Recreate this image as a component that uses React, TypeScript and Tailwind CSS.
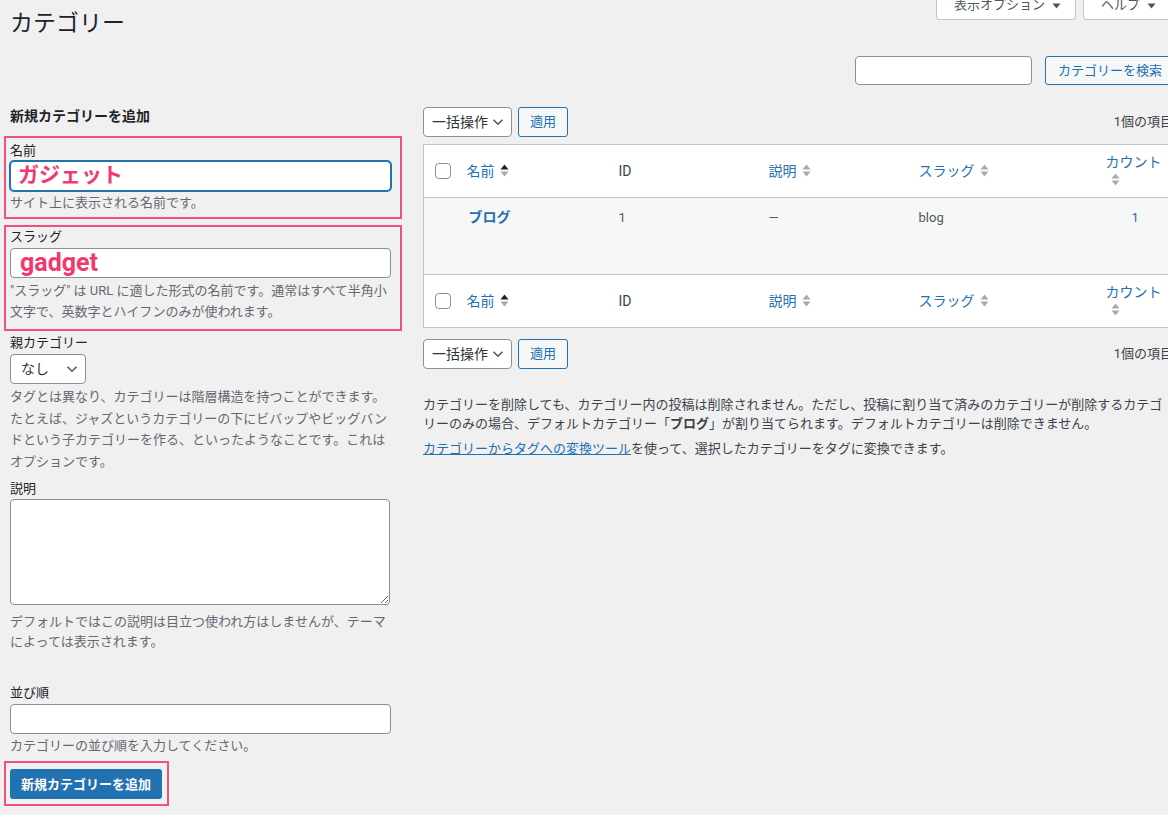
import React from 'react';

const font = "font-[Roboto,'Noto_Sans_CJK_JP',sans-serif]";

const Chevron = () => (
  <svg width="12" height="8" viewBox="0 0 12 8" className="shrink-0">
    <path d="M1.5 1.8 6 6.2l4.5-4.4" fill="none" stroke="#50575e" strokeWidth="1.6" />
  </svg>
);

const SortArrows = ({ active }: { active?: boolean }) => (
  <svg width="9" height="15" viewBox="0 0 9 15" className="inline-block ml-[5px] align-[-2px]">
    <path d="M0.5 6.5 4.5 1.5 8.5 6.5Z" fill={active ? '#1d2327' : '#a7aaad'} />
    <path d="M0.5 8.5 8.5 8.5 4.5 13.5Z" fill="#a7aaad" />
  </svg>
);

const Tri = () => (
  <svg width="9" height="6" viewBox="0 0 9 6" className="inline-block ml-[7px]">
    <path d="M0.5 0.5h8L4.5 5.5Z" fill="#50575e" />
  </svg>
);

const Checkbox = () => (
  <div className="w-[16px] h-[16px] border border-[#8c8f94] rounded-[4px] bg-white" />
);

const BulkActions = () => (
  <div className="flex items-center justify-between h-[30px]">
    <div className="flex items-center gap-[6px]">
      <div className="w-[89px] h-[30px] border border-[#8c8f94] rounded-[4px] bg-white flex items-center justify-between pl-[8px] pr-[7px] text-[14px] text-[#2c3338]">
        <span>一括操作</span>
        <Chevron />
      </div>
      <button className="h-[30px] px-[11px] border border-[#2271b1] rounded-[3px] bg-[#f6f7f7] text-[13px] text-[#2271b1]">
        適用
      </button>
    </div>
    <span className="text-[13px] text-[#3c434a] pr-[2px]">1個の項目</span>
  </div>
);

const HeadRow = () => (
  <tr className="h-[53px]">
    <td className="pl-[11px] align-middle">
      <Checkbox />
    </td>
    <th className="px-[10px] text-left font-normal align-middle">
      <span className="text-[#2271b1]">名前</span>
      <SortArrows active />
    </th>
    <th className="px-[10px] text-left font-normal align-middle text-[#3c434a]">ID</th>
    <th className="px-[10px] text-left font-normal align-middle">
      <span className="text-[#2271b1]">説明</span>
      <SortArrows />
    </th>
    <th className="px-[10px] text-left font-normal align-middle">
      <span className="text-[#2271b1]">スラッグ</span>
      <SortArrows />
    </th>
    <th className="px-[10px] text-left font-normal align-middle leading-[18px]">
      <span className="text-[#2271b1]">カウント</span>
      <br />
      <SortArrows />
    </th>
  </tr>
);

const Label = ({ children, className = '' }: { children: React.ReactNode; className?: string }) => (
  <div className={`text-[13px] leading-[18px] text-[#1d2327] ${className}`}>{children}</div>
);

const Help = ({ children, className = '' }: { children: React.ReactNode; className?: string }) => (
  <p className={`text-[13px] text-[#646970] ${className}`}>{children}</p>
);

export default function App() {
  return (
    <div className={`w-[1168px] h-[815px] overflow-hidden bg-[#f0f0f1] ${font}`}>
      <div className="w-[1186px] pl-[10px]">
        {/* header */}
        <div className="flex items-start justify-between">
          <h1 className="pt-[9px] text-[23px] leading-[30px] text-[#1d2327] font-normal">カテゴリー</h1>
          <div className="flex gap-[7px] -mt-[9px] pr-[8px]">
            <button className="h-[29px] w-[140px] border border-[#c3c4c7] border-t-0 rounded-b-[4px] bg-white text-[13px] leading-[18px] text-[#50575e] text-left pl-[17px]">
              表示オプション<Tri />
            </button>
            <button className="h-[29px] w-[95px] border border-[#c3c4c7] border-t-0 rounded-b-[4px] bg-white text-[13px] leading-[18px] text-[#50575e] text-left pl-[17px]">
              ヘルプ<Tri />
            </button>
          </div>
        </div>

        {/* search */}
        <div className="flex justify-end gap-[13px] mt-[17px] pr-[11px]">
          <input className="w-[177px] h-[29px] border border-[#8c8f94] rounded-[4px] bg-white" />
          <button className="h-[29px] w-[130px] border border-[#2271b1] rounded-[3px] bg-[#f6f7f7] text-[13px] text-[#2271b1]">
            カテゴリーを検索
          </button>
        </div>

        <div className="flex gap-[32px] mt-[22px]">
          {/* left column */}
          <div className="w-[381px] shrink-0">
            <h2 className="text-[14px] leading-[18px] font-bold text-[#1d2327]">新規カテゴリーを追加</h2>

            <div className="mt-[11px] -ml-[6px] w-[398px] border-2 border-[#f1507e] pl-[4px] pt-[4px] pb-[4px]">
              <Label>名前</Label>
              <input
                defaultValue="ガジェット"
                className="mt-[1px] w-[381px] h-[30px] border border-[#2271b1] shadow-[0_0_0_1px_#2271b1] rounded-[4px] bg-white px-[7px] text-[21px] font-bold text-[#f2386e] outline-none"
              />
              <Help className="mt-[2px] leading-[20px] w-[380px]">サイト上に表示される名前です。</Help>
            </div>

            <div className="mt-[6px] -ml-[6px] w-[398px] border-2 border-[#f1507e] pl-[4px] pt-[1px] pb-[7px]">
              <Label>スラッグ</Label>
              <input
                defaultValue="gadget"
                className="mt-[2px] w-[381px] h-[30px] border border-[#8c8f94] rounded-[4px] bg-white px-[9px] text-[25px] font-bold text-[#f2386e] outline-none"
              />
              <Help className="mt-[2px] leading-[21px] w-[380px]">
                "スラッグ" は URL に適した形式の名前です。通常はすべて半角小文字で、英数字とハイフンのみが使われます。
              </Help>
            </div>

            <Label className="mt-[3px]">親カテゴリー</Label>
            <div className="mt-[2px] w-[76px] h-[30px] border border-[#8c8f94] rounded-[4px] bg-white flex items-center justify-between pl-[10px] pr-[7px] text-[14px] text-[#2c3338]">
              <span>なし</span>
              <Chevron />
            </div>
            <Help className="mt-[2px] leading-[21.5px]">
              タグとは異なり、カテゴリーは階層構造を持つことができます。たとえば、ジャズというカテゴリーの下にビバップやビッグバンドという子カテゴリーを作る、といったようなことです。これはオプションです。
            </Help>

            <Label className="mt-[8px]">説明</Label>
            <textarea className="block mt-[1px] w-[380px] h-[106px] border border-[#8c8f94] rounded-[4px] bg-white" />
            <Help className="mt-[7px] leading-[20px]">
              デフォルトではこの説明は目立つ使われ方はしませんが、テーマによっては表示されます。
            </Help>

            <Label className="mt-[32px]">並び順</Label>
            <input className="block mt-[2px] w-[381px] h-[30px] border border-[#8c8f94] rounded-[4px] bg-white" />
            <Help className="mt-[2px] leading-[20px]">カテゴリーの並び順を入力してください。</Help>

            <div className="mt-[5px] -ml-[6px] inline-flex border-2 border-[#f1507e] pl-[4px] pr-[5px] pt-[6px] pb-[5px]">
              <button className="w-[152px] h-[30px] rounded-[3px] bg-[#2271b1] text-white text-[13px] font-bold">
                新規カテゴリーを追加
              </button>
            </div>
          </div>

          {/* right column */}
          <div className="w-[752px] shrink-0">
            <BulkActions />

            <table className="mt-[7px] w-[752px] table-fixed border border-[#c3c4c7] text-[14px] bg-white">
              <colgroup>
                <col className="w-[33px]" />
                <col className="w-[152px]" />
                <col className="w-[150px]" />
                <col className="w-[150px]" />
                <col className="w-[187px]" />
                <col className="w-[80px]" />
              </colgroup>
              <thead className="border-b border-[#c3c4c7]">
                <HeadRow />
              </thead>
              <tbody>
                <tr className="h-[77px] bg-[#f6f7f7] align-top text-[13px] text-[#50575e]">
                  <td />
                  <td className="px-[10px] pt-[9px]">
                    <span className="text-[14px] font-bold text-[#2271b1] pl-[2px]">ブログ</span>
                  </td>
                  <td className="px-[10px] pt-[10px]">1</td>
                  <td className="px-[10px] pt-[10px]">—</td>
                  <td className="px-[10px] pt-[10px]">blog</td>
                  <td className="px-[10px] pt-[10px] text-center text-[#2271b1]">1</td>
                </tr>
              </tbody>
              <tfoot className="border-t border-[#c3c4c7]">
                <HeadRow />
              </tfoot>
            </table>

            <div className="mt-[11px]">
              <BulkActions />
            </div>

            <p className="mt-[26px] text-[13px] leading-[19px] text-[#3c434a] pr-[10px]">
              カテゴリーを削除しても、カテゴリー内の投稿は削除されません。ただし、投稿に割り当て済みのカテゴリーが削除するカテゴリーのみの場合、デフォルトカテゴリー「<strong>ブログ</strong>」が割り当てられます。デフォルトカテゴリーは削除できません。
            </p>
            <p className="mt-[6px] text-[13px] leading-[19px] text-[#3c434a]">
              <a className="text-[#2271b1] underline">カテゴリーからタグへの変換ツール</a>を使って、選択したカテゴリーをタグに変換できます。
            </p>
          </div>
        </div>
      </div>
    </div>
  );
}
